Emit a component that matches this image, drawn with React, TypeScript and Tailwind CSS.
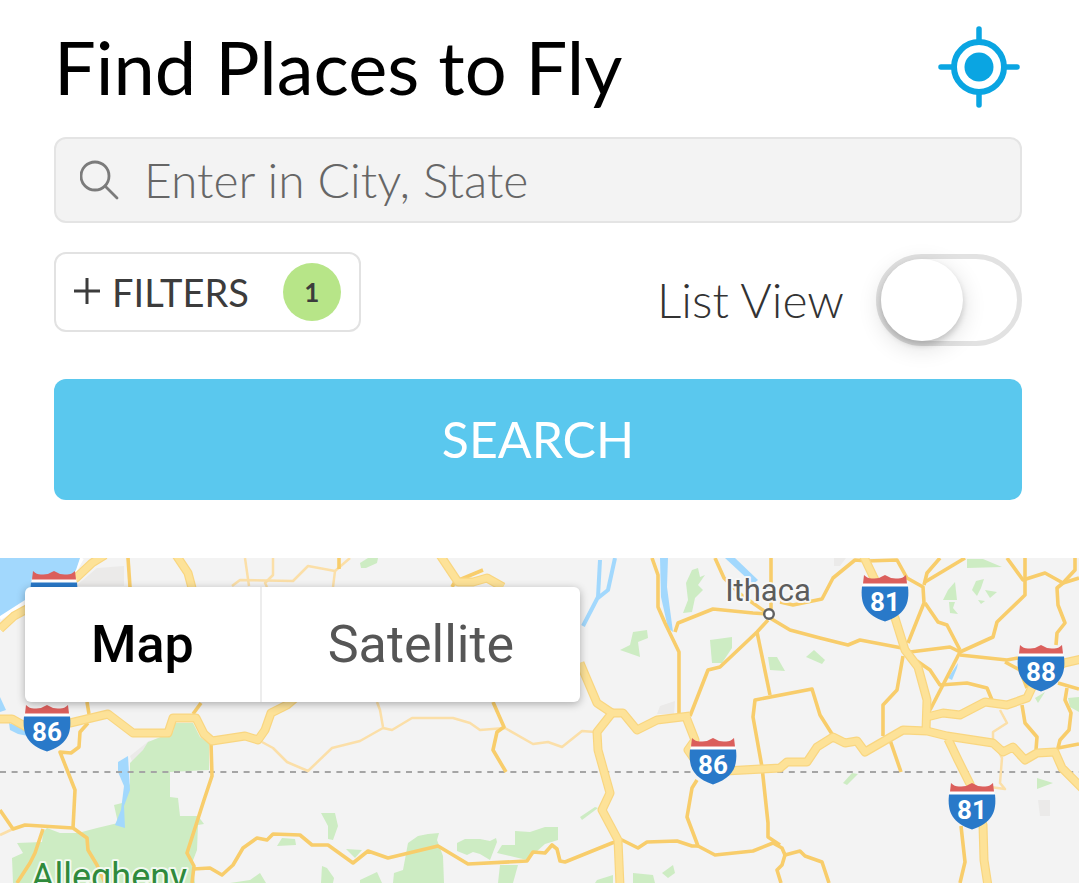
import { useState } from 'react'

const parks = [
    "175,165 193,165 200,179 209,185 209,212 170,214 170,239 178,240 180,258 198,258 204,266 198,267 197,292 192,305 195,325 13,325 12,300 23,295 17,285 42,284 43,274 47,270 60,275 78,275 97,270 118,265 114,247 122,245 130,225 130,205 143,192 148,184 173,174",
    "360,5 368,0 378,0 377,5 366,10 361,10",
    "321,255 335,255 338,268 333,282 328,281 328,268",
    "277,288 282,280 295,281 296,287",
    "346,291 362,292 355,300",
    "408,285 418,278 428,276 439,275 437,282 443,298 444,325 393,325 394,315 403,312",
    "457,285 465,281 480,281 490,283 496,280 497,284 490,302 480,296 473,294 467,297 457,293",
    "515,273 530,274 545,269 558,269 558,282 545,286 527,302 497,295 502,287 515,287",
    "500,307 518,307 513,325 498,325",
    "322,308 327,310 334,320 333,325 321,325",
    "360,322 377,314 382,325 360,325",
    "260,315 266,325 230,325 250,322",
    "620,92 630,87 633,74 647,72 648,80 638,84 640,99",
    "710,82 732,79 732,90 722,105 712,105",
    "768,99 777,99 785,113 770,112",
    "806,99 814,92 825,102 822,106",
    "692,12 698,10 700,19 705,17 698,27 703,32 695,40 692,54 683,55 688,42 686,25",
    "580,259 595,249 598,250 582,262",
    "633,315 653,317 655,325 633,325",
    "662,315 673,307 675,315 668,320",
    "597,322 613,317 613,325 595,325",
    "967,1 983,1 1002,9 967,10",
    "955,24 957,42 943,42 948,32",
    "972,32 976,23 984,21 981,30 977,38",
    "985,32 997,34 990,40",
    "949,44 955,44 953,50 958,56 950,55",
    "978,42 985,43 981,46",
    "843,225 852,215 858,216 847,227",
    "1037,220 1053,225 1037,231",
    "1068,140 1079,139 1079,154 1070,149",
    "1035,140 1045,134 1038,145",
]

const waters = [
    "0,0 80,0 76,12 67,25 50,34 25,42 0,58",
    "0,139 6,152 0,154",
    "9,165 26,171 28,178 18,176 10,172",
    "118,204 128,198 130,232 124,248 125,270 115,267 121,252 124,228 118,214",
    "660,0 668,0 667,29 673,74 668,70 661,39",
    "725,0 735,0 758,22 753,26",
    "948,120 958,105 957,110 952,122",
]

const urban = [
    "97,10 124,8 124,28 76,28",
    "130,198 150,182 143,196 133,206",
    "660,148 675,143 674,156 657,156",
    "1038,242 1050,242 1050,258 1040,258",
    "834,0 846,0 840,8 834,8",
]

const thinRoads = [
    "M245,0 L249,28",
    "M273,0 L273,17 L265,25 L267,29",
    "M232,28 L240,22 L293,23 L308,8 L335,13 L350,0",
    "M335,13 L333,29",
    "M262,184 L273,190 L287,204 L308,213 L332,190 L360,183 L383,170 L392,172 L412,160 L453,160 L470,165 L480,172 L505,170 L533,186 L548,184 L562,189 L582,173 L595,174",
    "M377,144 L380,152 L383,169",
    "M0,277 L13,271",
    "M1000,152 L1007,165 L993,174 L993,182 L1002,200 L1000,225 L1005,231 L990,229",
]

const roads = [
    "M128,0 L130,29",
    "M339,0 L339,11",
    "M459,22 L483,12",
    "M456,22 L452,29",
    "M87,144 L89,156",
    "M88,165 L80,174 L79,189 L71,195 L60,194 L75,232 L73,270",
    "M201,145 L193,156",
    "M0,252 L13,271 L25,267 L73,270 L87,280 L88,292 L97,307 L105,325",
    "M43,271 L35,295 L30,305 L17,325",
    "M211,185 L212,218 L204,242 L187,295 L194,308 L192,325",
    "M193,311 L210,310 L222,317 L233,307 L243,290 L257,280 L267,282 L273,276 L300,277 L312,287 L328,287 L353,305 L368,293 L388,300 L438,288 L468,306 L527,303 L533,294 L545,295 L552,287 L557,291 L560,303 L565,304 L612,285 L622,282 L638,290 L647,284 L677,283 L692,288 L698,288",
    "M493,144 L504,169 L497,174 L493,192 L506,214",
    "M652,0 L658,17 L658,49 L665,65 L679,94 L679,155",
    "M675,74 L678,65 L713,51 L753,55 L768,56",
    "M715,0 L724,20 L740,36 L767,55",
    "M771,0 L771,52",
    "M768,62 L757,74 L720,109 L708,112 L690,158",
    "M757,74 L770,137",
    "M770,60 L790,72 L820,80 L848,87 L860,82 L902,90",
    "M780,44 L793,47 L822,41 L833,20 L855,2 L867,3 L897,2 L907,20 L923,29 L924,45 L908,85",
    "M832,176 L820,157 L812,131 L755,142 L753,159 L762,209 L768,265 L768,279 L780,287",
    "M697,222 L692,230 L687,259 L698,288 L715,297 L753,293 L773,285 L782,290 L785,297 L800,293 L805,298 L822,304 L829,325",
    "M785,297 L782,307 L777,312 L781,325",
    "M961,268 L965,304 L960,325",
    "M940,0 L927,15 L924,27",
    "M965,0 L925,24",
    "M925,45 L938,64 L947,67 L960,92",
    "M910,94 L950,89 L960,94 L993,79 L997,64 L1025,37 L1025,0",
    "M960,94 L930,152",
    "M960,97 L1007,102 L1018,100",
    "M1005,104 L1020,112 L1027,130",
    "M1007,0 L1023,22 L1045,15 L1063,25 L1079,20",
    "M1075,0 L1075,12 L1063,25 L1057,30 L1058,47 L1065,65 L1057,75 L1056,87",
    "M903,98 L897,132 L883,147 L883,178",
    "M890,182 L901,214",
    "M917,103 L930,112 L940,127 L967,125 L987,130 L992,142",
    "M1022,147 L1025,165 L1037,179 L1036,192",
    "M1058,125 L1079,131",
    "M1067,130 L1065,142 L1071,155 L1069,172 L1060,182 L1058,190 L1079,186",
]

const highways = [
    "M0,71 L14,58 L25,52 L55,34 L76,20 L92,5 L105,-3",
    "M176,-3 L188,15 L192,30",
    "M440,-3 L458,24 L473,24 L487,20 L503,29",
    "M0,161 L12,161 L30,171 L70,165 L108,156 L133,175 L168,175 L173,160 L196,160 L204,176 L212,183 L245,178 L258,182 L265,172 L271,155 L287,147 L295,140",
    "M580,105 L597,145 L612,155 L597,174 L598,192 L610,235 L602,252 L618,282 L620,328",
    "M612,155 L623,155 L637,172 L657,162 L690,158",
    "M686,159 L695,182 L688,192 L697,205",
    "M725,213 L780,210 L787,204 L807,204 L817,189 L833,179 L845,185 L857,183 L865,194 L903,172 L927,173 L947,178 L993,185 L1003,194 L1013,189 L1025,202 L1037,195 L1055,194 L1062,210 L1082,230",
    "M863,-3 L873,18 L895,60 L905,92 L918,109 L927,142 L926,172",
    "M948,181 L958,202 L970,226 L983,267 L984,302 L988,328",
    "M927,159 L943,155 L960,157 L985,144 L1007,147 L1027,140 L1034,125 L1064,105 L1082,101",
]

const shields = [
    { label: "", x: 54, y: 13 },
    { label: "86", x: 47, y: 147 },
    { label: "86", x: 713, y: 180 },
    { label: "81", x: 885, y: 17 },
    { label: "88", x: 1041, y: 87 },
    { label: "81", x: 972, y: 225 },
]

const Shield = ({ label, x, y }: { label: string; x: number; y: number }) => (
    <g transform={`translate(${x} ${y})`}>
        <path d="M-22,7 L22,7 L23,13 L-23,13 Z" fill="#fff" />
        <path d="M-21,0 Q-17,4 -12,3.5 Q-6,4 0,0 Q6,4 12,3.5 Q17,4 21,0 L22,8.5 L-22,8.5 Z" fill="#db5f5c" />
        <path d="M-23,11.5 L23,11.5 C25,30 19,40 0,46.5 C-19,40 -25,30 -23,11.5 Z" fill="#2979c9" />
        <text x="0" y="36" textAnchor="middle" className="fill-white font-[Roboto,sans-serif] text-[26px] font-bold">
            {label}
        </text>
    </g>
)

const MapCanvas = () => (
    <svg
        viewBox="0 0 1079 325"
        preserveAspectRatio="xMinYMin slice"
        className="block w-full h-full"
        role="img"
        aria-label="Map"
        fill="none"
        strokeLinejoin="round"
    >
        <rect width="1079" height="325" fill="#f3f3f3" />
        {urban.map((p) => <polygon key={p} points={p} fill="#ebeae9" />)}
        {parks.map((p) => <polygon key={p} points={p} fill="#cdecc3" />)}
        <path d="M0,60 L25,44 L67,27 L82,0" stroke="#fff" strokeWidth="4" />
        {waters.map((p) => <polygon key={p} points={p} fill="#a2d8fd" />)}
        <path d="M600,2 L598,39 L583,68 M615,0 L608,32 L598,40" stroke="#a2d8fd" strokeWidth="4" />
        <path d="M0,214 H1079" stroke="#a5a5a5" strokeWidth="2" strokeDasharray="6 5.6" />
        {thinRoads.map((d) => <path key={d} d={d} stroke="#fbdfa8" strokeWidth="2.5" />)}
        {roads.map((d) => <path key={d} d={d} stroke="#f8cd6b" strokeWidth="3.6" />)}
        {highways.map((d) => <path key={d} d={d} stroke="#f9d680" strokeWidth="9" />)}
        {highways.map((d) => <path key={d} d={d} stroke="#fde298" strokeWidth="6.6" />)}
        {shields.map((s) => <Shield key={`${s.x}-${s.y}`} {...s} />)}
        <circle cx="769" cy="56" r="4.8" fill="#fff" stroke="#616161" strokeWidth="2.4" />
        <text x="768" y="43" textAnchor="middle" stroke="#f7f7f7" strokeWidth="4" paintOrder="stroke" className="fill-[#5c5c5c] font-[Roboto,sans-serif] text-[31px]">
            Ithaca
        </text>
        <text x="31" y="331" stroke="#f3faf1" strokeWidth="4" paintOrder="stroke" className="fill-[#2f8a3c] font-[Roboto,sans-serif] text-[36px]">
            Allegheny
        </text>
    </svg>
)

const App = () => {
    const [city, setCity] = useState("");
    const [listView, setListView] = useState(false);
    const [mapType, setMapType] = useState("map");

    return (
        <div className="flex flex-col min-h-screen bg-white font-[Lato,sans-serif]">
            <form onSubmit={(e) => e.preventDefault()} className="flex flex-col pl-[54px] pr-[57px] pt-6 pb-[58px]">
                <div className="flex items-center justify-between h-[86px]">
                    <h1 className="text-[74px] leading-[86px] text-black">Find Places to Fly</h1>
                    <button type="button" aria-label="Use my location">
                        <svg width="86" height="86" viewBox="0 0 86 86" fill="none" stroke="#0aa5e2">
                            <circle cx="43" cy="43" r="25" strokeWidth="6" />
                            <circle cx="43" cy="43" r="14.5" fill="#0aa5e2" stroke="none" />
                            <path d="M43 5v13M43 68v13M5 43h13M68 43h13" strokeWidth="5.5" strokeLinecap="round" />
                        </svg>
                    </button>
                </div>

                <label className="flex items-center h-[86px] mt-[27px] px-6 gap-6 rounded-xl border-2 border-[#e4e4e4] bg-[#f3f3f3]">
                    <svg width="40" height="40" viewBox="0 0 40 40" fill="none" stroke="#7b7b7b" strokeWidth="2.8" strokeLinecap="round">
                        <circle cx="15" cy="16" r="14" />
                        <path d="M25 26l12 12" />
                    </svg>
                    <input
                        type="text"
                        aria-label="City, State"
                        placeholder="Enter in City, State"
                        value={city}
                        onChange={(e) => setCity(e.target.value)}
                        className="flex-1 min-w-0 bg-transparent outline-none text-[48px] font-light text-[#444] placeholder:text-[#666]"
                    />
                </label>

                <div className="flex items-start justify-between mt-[29px]">
                    <button type="button" className="flex items-center h-20 px-[18px] rounded-xl border-2 border-[#e2e2e2] text-[#3c3c3c]">
                        <svg width="26" height="28" viewBox="0 0 26 28" stroke="#3c3c3c" strokeWidth="3">
                            <path d="M13 0v26M0 13h26" />
                        </svg>
                        <span className="ml-3 text-[38px]">FILTERS</span>
                        <span className="flex items-center justify-center w-[58px] h-[58px] ml-[34px] rounded-full bg-[#b7e588] text-[26px] font-bold">1</span>
                    </button>
                    <label className="flex items-center gap-8 mt-[2px] text-[48px] font-light text-[#333]">
                        List View
                        <input
                            type="checkbox"
                            role="switch"
                            checked={listView}
                            onChange={(e) => setListView(e.target.checked)}
                            className="appearance-none w-[146px] h-[92px] rounded-full border-[5px] border-[#e2e2e2] bg-white before:block before:w-[82px] before:h-[82px] before:rounded-full before:bg-white before:shadow-[0_4px_6px_rgba(0,0,0,0.16),0_6px_24px_rgba(0,0,0,0.14)] checked:before:ml-[54px]"
                        />
                    </label>
                </div>

                <button type="submit" className="h-[121px] mt-[33px] rounded-xl bg-[#5ac8ee] text-white text-[50px]">
                    SEARCH
                </button>
            </form>

            <div className="relative flex-1">
                <MapCanvas />
                <div className="absolute left-[25px] top-[29px] flex h-[115px] rounded-md bg-white shadow-[0_2px_8px_rgba(0,0,0,0.3)] font-[Roboto,sans-serif] text-[52px]">
                    <button
                        type="button"
                        onClick={() => setMapType("map")}
                        className={`px-[66px] border-r-2 border-[#ededed] ${mapType === "map" ? "font-medium text-black" : "text-[#565656]"}`}
                    >
                        Map
                    </button>
                    <button
                        type="button"
                        onClick={() => setMapType("satellite")}
                        className={`px-[66px] ${mapType === "satellite" ? "font-medium text-black" : "text-[#565656]"}`}
                    >
                        Satellite
                    </button>
                </div>
            </div>
        </div>
    )
}

export default App
